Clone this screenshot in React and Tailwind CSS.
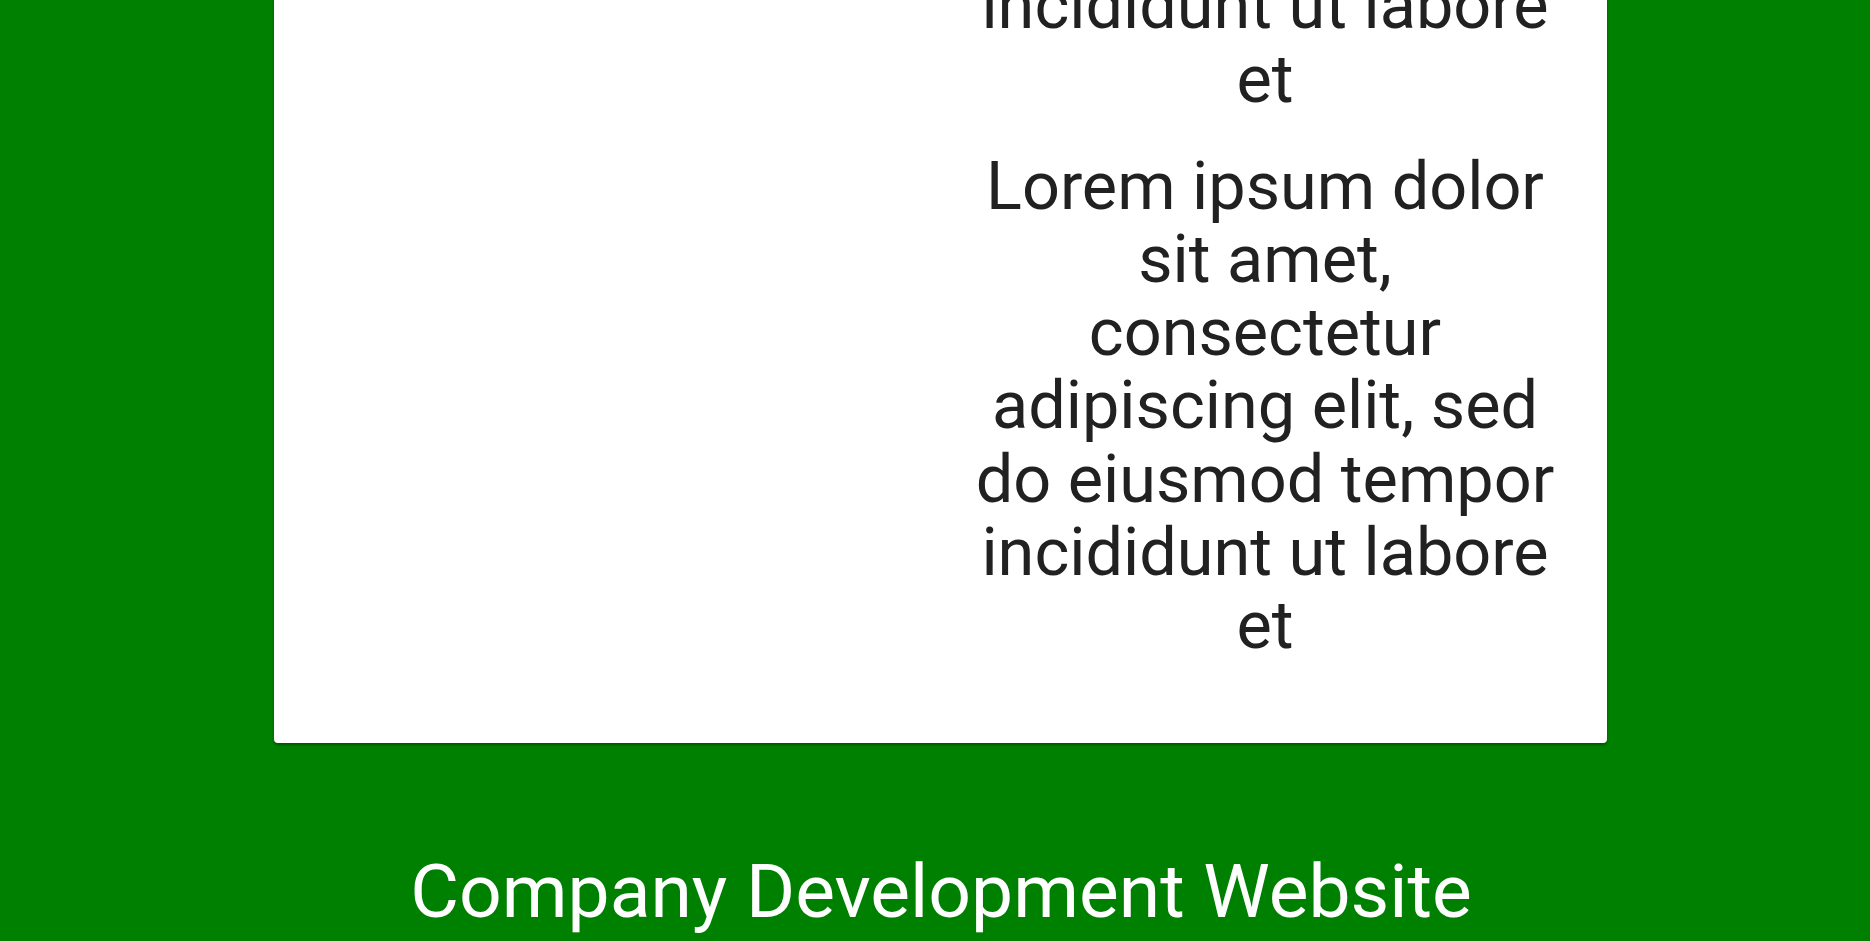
import React from 'react'

const LOREM = 'Lorem ipsum dolor sit amet, consectetur adipiscing elit, sed do eiusmod tempor incididunt ut labore et'

const App = () => {
  return (
    <div className="min-h-screen w-full overflow-hidden bg-[#008000]" style={{ fontFamily: 'Roboto, "Liberation Sans", sans-serif' }}>
      {/* content card */}
      <div className="-mt-[397px] ml-[274px] w-[1333px] rounded bg-white shadow-[0_2px_3px_rgba(0,0,0,0.35)] flex">
        <div className="flex-1" />
        <div className="w-[620px] mr-[32px] pb-[80px] text-center text-[66.6px] leading-[73.3px] text-[#212121]">
          <p>{LOREM}</p>
          <p className="mt-[33.5px]">{LOREM}</p>
        </div>
      </div>

      {/* footer */}
      <div className="pt-[104px] pl-[12px] text-center text-[75px] leading-[88px] text-white">
        Company Development Website
      </div>
    </div>
  )
}

export default App
